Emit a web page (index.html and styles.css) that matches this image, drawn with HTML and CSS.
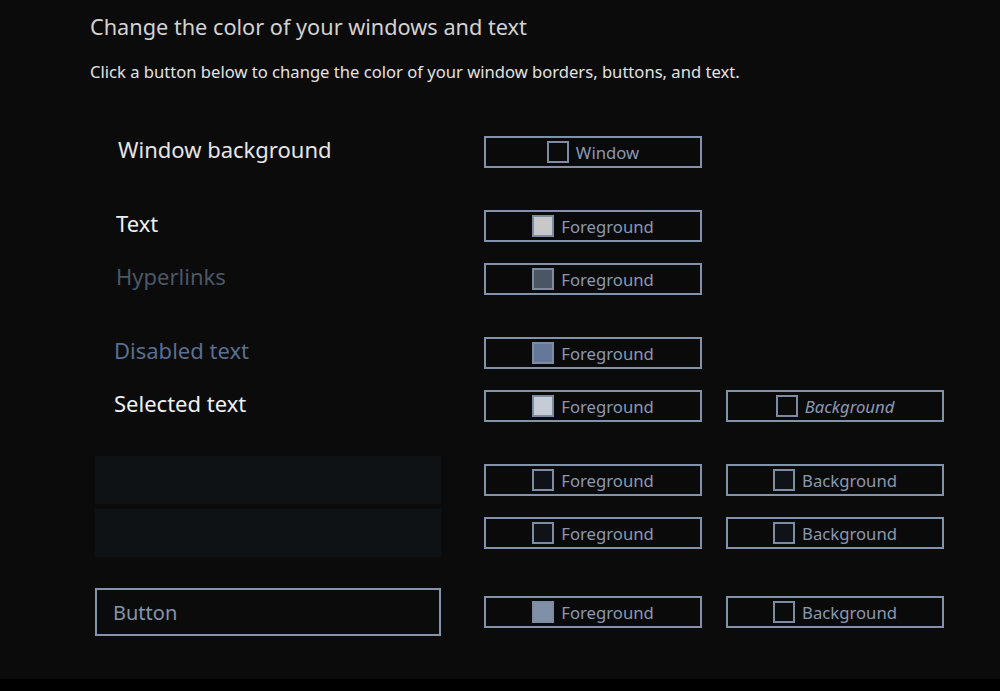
FILE: index.html
```html
<!DOCTYPE html>
<html lang="en">
<head>
<meta charset="utf-8">
<title>Change the color of your windows and text</title>
<link rel="stylesheet" href="styles.css">
</head>
<body>
<main class="panel">
  <h1 class="title">Change the color of your windows and text</h1>
  <p class="subtitle">Click a button below to change the color of your window borders, buttons, and text.</p>

  <div class="rows">
    <div class="row">
      <div class="label label-window">Window background</div>
      <button class="color-btn"><span class="swatch sw-window"></span>Window</button>
    </div>

    <div class="row group">
      <div class="label label-text">Text</div>
      <button class="color-btn"><span class="swatch sw-text"></span>Foreground</button>
    </div>

    <div class="row">
      <div class="label label-link">Hyperlinks</div>
      <button class="color-btn"><span class="swatch sw-link"></span>Foreground</button>
    </div>

    <div class="row group">
      <div class="label label-disabled">Disabled text</div>
      <button class="color-btn"><span class="swatch sw-disabled"></span>Foreground</button>
    </div>

    <div class="row">
      <div class="label label-selected">Selected text</div>
      <button class="color-btn"><span class="swatch sw-selected"></span>Foreground</button>
      <button class="color-btn"><span class="swatch sw-empty"></span><i class="italic">Background</i></button>
    </div>

    <div class="row group">
      <div class="darkbox"></div>
      <button class="color-btn"><span class="swatch sw-dark"></span>Foreground</button>
      <button class="color-btn"><span class="swatch sw-dark"></span>Background</button>
    </div>

    <div class="row">
      <div class="darkbox"></div>
      <button class="color-btn"><span class="swatch sw-dark"></span>Foreground</button>
      <button class="color-btn"><span class="swatch sw-dark"></span>Background</button>
    </div>

    <div class="row group-lg">
      <div class="button-sample">Button</div>
      <button class="color-btn"><span class="swatch sw-button"></span>Foreground</button>
      <button class="color-btn"><span class="swatch sw-empty"></span>Background</button>
    </div>
  </div>
</main>
</body>
</html>
```

FILE: styles.css
```css
html, body {
  margin: 0;
  padding: 0;
  background: #000;
  height: 100%;
}

body {
  font-family: "Noto Sans", "Open Sans", sans-serif;
  color: #d4d4d4;
}

.panel {
  background: #0b0b0b;
  height: 679px;
  padding: 13px 0 0 90px;
  box-sizing: border-box;
}

.title {
  margin: 0;
  font-size: 21.7px;
  font-weight: 400;
  line-height: 28px;
  color: #d2d2d2;
}

.subtitle {
  margin: 20px 0 0 0;
  font-size: 16.6px;
  line-height: 22px;
  color: #e2e2e2;
}

.rows {
  display: flex;
  flex-direction: column;
  gap: 5px;
  margin-top: 45px;
  margin-left: 5px;
}

.row {
  display: grid;
  grid-template-columns: 365px 218px 218px;
  column-gap: 24px;
  height: 48px;
  align-items: center;
}

.group {
  margin-top: 21px;
}

.group-lg {
  margin-top: 26px;
}

.label {
  font-size: 22px;
  padding-left: 21px;
  line-height: 28px;
}

.label-window { color: #e6e6e6; padding-left: 23px; margin-top: -6px; }
.label-text { color: #eeeeee; margin-top: -6px; }
.label-link { color: #4a5868; margin-top: -6px; }
.label-disabled { color: #5a6f90; padding-left: 19px; margin-top: -6px; }
.label-selected { color: #f0f0f0; padding-left: 19px; margin-top: -6px; }

.darkbox {
  width: 346px;
  height: 48px;
  background: #0e1215;
}

.button-sample {
  width: 346px;
  height: 48px;
  box-sizing: border-box;
  border: 2px solid #8595ad;
  display: flex;
  align-items: center;
  padding-left: 16px;
  font-size: 20px;
  color: #8595ae;
}

.color-btn {
  height: 32px;
  width: 218px;
  box-sizing: border-box;
  border: 2px solid #8292aa;
  background: #0a0a0b;
  display: flex;
  align-items: center;
  justify-content: center;
  gap: 7px;
  font-family: "Noto Sans", "Open Sans", sans-serif;
  font-size: 16.7px;
  color: #8a99b1;
  padding: 0;
}

.italic {
  font-style: italic;
}

.swatch {
  width: 22px;
  height: 22px;
  box-sizing: border-box;
  border: 2px solid #7d8ca3;
  display: inline-block;
}

.sw-window { background: #0b0b0c; }
.sw-text { background: #c8c8c8; }
.sw-link { background: #4b5664; }
.sw-disabled { background: #66789a; }
.sw-selected { background: #c5ccd6; }
.sw-empty { background: #0b0b0c; }
.sw-dark { background: #0f1317; }
.sw-button { background: #8090a8; }
```
